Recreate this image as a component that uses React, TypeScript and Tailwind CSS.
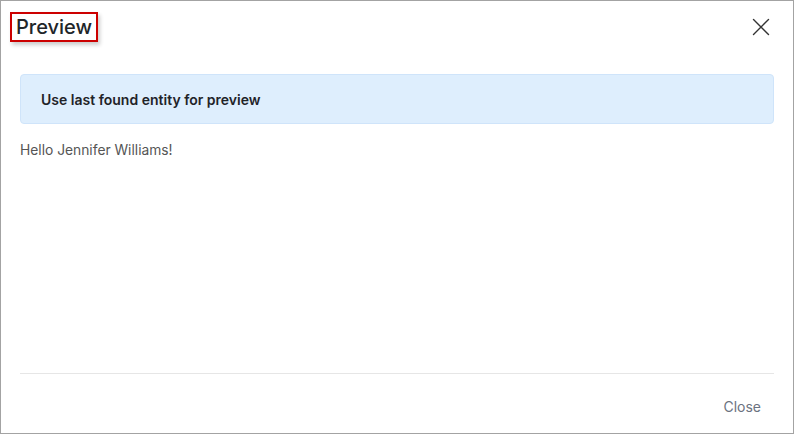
import React from "react";

const App = () => {
  return (
    <div
      className="w-[794px] h-[434px] bg-white border border-[#a3a3a3] flex flex-col"
      style={{ fontFamily: "Inter, 'Noto Sans', sans-serif" }}
    >
      {/* Header */}
      <div className="flex items-start justify-between pl-[9px] pr-[23px] pt-[11px] h-[72px]">
        <div className="border-2 border-[#cc0000] px-[4px] h-[30px] flex items-center shadow-[2px_3px_4px_rgba(0,0,0,0.2)]">
          <h1 className="text-[20px] leading-none text-[#212529] font-medium">Preview</h1>
        </div>
        <button className="mt-[6px] text-[#333]">
          <svg width="18" height="18" viewBox="0 0 18 18" fill="none" stroke="currentColor" strokeWidth="1.4" strokeLinecap="round">
            <path d="M1.5 1.5 L16.5 16.5 M16.5 1.5 L1.5 16.5" />
          </svg>
        </button>
      </div>

      {/* Body */}
      <div className="flex-1 pl-[19px] pr-[19px] pt-[1px]">
        <div className="h-[50px] rounded-[4px] bg-[#deeefd] border border-[#cfe4fa] flex items-center pl-[20px]">
          <span className="text-[14px] font-semibold text-[#1f2328]">Use last found entity for preview</span>
        </div>
        <p className="mt-[16px] text-[13.8px] text-[#555]">Hello Jennifer Williams!</p>
      </div>

      {/* Footer */}
      <div className="mx-[19px] border-t border-[#e6e6e6] h-[60px] flex items-center justify-end pr-[13px] pt-[6px]">
        <button className="text-[14px] text-[#6b7280]">Close</button>
      </div>
    </div>
  );
};

export default App;
